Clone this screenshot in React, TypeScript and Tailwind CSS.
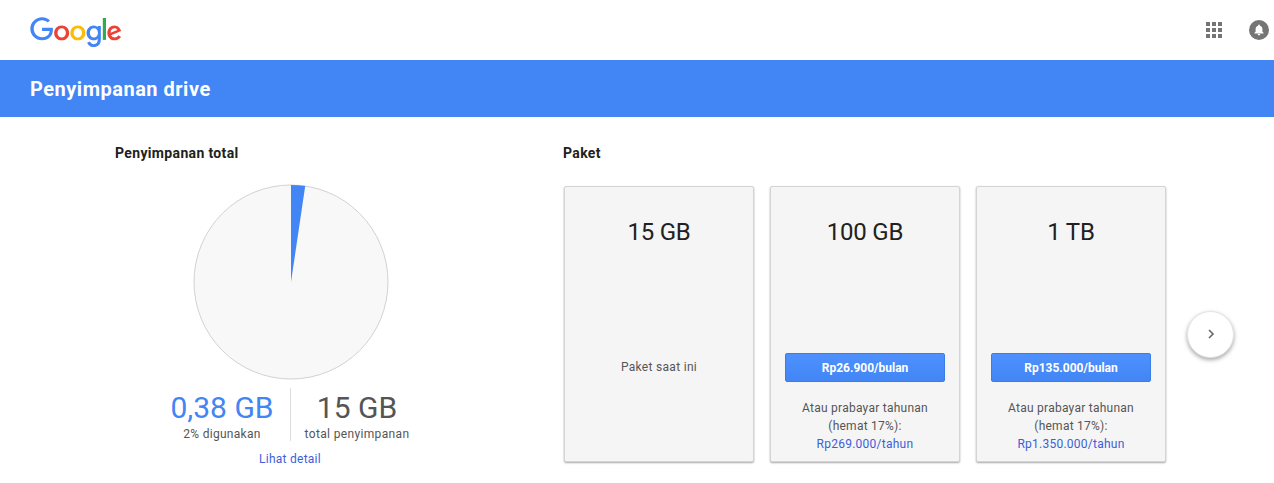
const font = { fontFamily: "Roboto, sans-serif" };

const plans = [
  { size: "15 GB", current: true },
  { size: "100 GB", price: "Rp26.900/bulan", year: "Rp269.000/tahun" },
  { size: "1 TB", price: "Rp135.000/bulan", year: "Rp1.350.000/tahun" },
];

function GoogleLogo() {
  return (
    <svg width="92" height="31" viewBox="0 0 272 92" aria-label="Google">
      <path fill="#EA4335" d="M115.75 47.18c0 12.77-9.99 22.18-22.25 22.18s-22.25-9.41-22.25-22.18C71.25 34.32 81.24 25 93.5 25s22.25 9.32 22.25 22.18zm-9.74 0c0-7.98-5.79-13.44-12.51-13.44S80.99 39.2 80.99 47.18c0 7.9 5.79 13.44 12.51 13.44s12.51-5.55 12.51-13.44z" />
      <path fill="#FBBC05" d="M163.75 47.18c0 12.77-9.99 22.18-22.25 22.18s-22.25-9.41-22.25-22.18c0-12.85 9.99-22.18 22.25-22.18s22.25 9.32 22.25 22.18zm-9.74 0c0-7.98-5.79-13.44-12.51-13.44s-12.51 5.46-12.51 13.44c0 7.9 5.79 13.44 12.51 13.44s12.51-5.55 12.51-13.44z" />
      <path fill="#4285F4" d="M209.75 26.34v39.82c0 16.38-9.66 23.07-21.08 23.07-10.75 0-17.22-7.19-19.66-13.07l8.48-3.53c1.51 3.61 5.21 7.87 11.17 7.87 7.31 0 11.84-4.51 11.84-13v-3.19h-.34c-2.18 2.69-6.38 5.04-11.68 5.04-11.09 0-21.25-9.66-21.25-22.09 0-12.52 10.16-22.26 21.25-22.26 5.29 0 9.49 2.35 11.68 4.96h.34v-3.61h9.25zm-8.56 20.92c0-7.81-5.21-13.52-11.84-13.52-6.72 0-12.35 5.71-12.35 13.52 0 7.73 5.63 13.36 12.35 13.36 6.63 0 11.84-5.63 11.84-13.36z" />
      <path fill="#34A853" d="M225 3v65h-9.5V3h9.5z" />
      <path fill="#EA4335" d="M262.02 54.48l7.56 5.04c-2.44 3.61-8.32 9.83-18.48 9.83-12.6 0-22.01-9.74-22.01-22.18 0-13.19 9.49-22.18 20.92-22.18 11.51 0 17.14 9.16 18.98 14.11l1.01 2.52-29.65 12.28c2.27 4.45 5.8 6.72 10.75 6.72 4.96 0 8.4-2.44 10.92-6.14zm-23.27-7.98l19.82-8.23c-1.09-2.77-4.37-4.7-8.23-4.7-4.95 0-11.84 4.37-11.59 12.93z" />
      <path fill="#4285F4" d="M35.29 41.41V32H67c.31 1.64.47 3.58.47 5.68 0 7.06-1.93 15.79-8.15 22.01-6.05 6.3-13.78 9.66-24.02 9.66C16.32 69.35.36 53.89.36 34.91.36 15.93 16.32.47 35.3.47c10.5 0 17.98 4.12 23.6 9.49l-6.64 6.64c-4.03-3.78-9.49-6.72-16.97-6.72-13.86 0-24.7 11.17-24.7 25.03 0 13.86 10.84 25.03 24.7 25.03 8.99 0 14.11-3.61 17.39-6.89 2.66-2.66 4.41-6.46 5.1-11.65l-22.49.01z" />
    </svg>
  );
}

function AppsIcon() {
  return (
    <svg width="16" height="16" viewBox="0 0 16 16" fill="#757575">
      {[0, 6, 12].map((y) =>
        [0, 6, 12].map((x) => <rect key={`${x}-${y}`} x={x} y={y} width="4" height="4" />)
      )}
    </svg>
  );
}

function BellIcon() {
  return (
    <svg width="20" height="20" viewBox="0 0 20 20">
      <circle cx="10" cy="10" r="10" fill="#757575" />
      <path
        fill="#fff"
        d="M10 4.6c-.5 0-.9.4-.9.9v.3C7.4 6.2 6.6 7.600 6.600 9.300v2.400l-1.100 1.100v.6h9v-.6l-1.100-1.100V9.300c0-1.700-.8-3.100-2.500-3.500v-.3c0-.5-.4-.9-.9-.9zM8.700 14c0 .7.6 1.300 1.300 1.300s1.300-.6 1.300-1.300z"
      />
    </svg>
  );
}

function Pie() {
  return (
    <svg width="196" height="196" viewBox="0 0 196 196" className="block">
      <circle cx="98" cy="98" r="97" fill="#f8f8f8" stroke="#d2d2d2" strokeWidth="1" />
      <path d="M98 98 L98 1 A97 97 0 0 1 112.200 2 Z" fill="#4285f4" />
    </svg>
  );
}

function PlanCard({ plan }: { plan: (typeof plans)[number] }) {
  return (
    <div className="flex h-[276px] w-[190px] flex-col items-center rounded-[2px] border border-[#d4d4d4] bg-[#f5f5f5] px-[14px] shadow-[0_1px_2px_rgba(0,0,0,0.35)]">
      <div className="mt-[30px] text-[24px] leading-[30px] tracking-[-0.2px] text-[#212121]">{plan.size}</div>
      {plan.current ? (
        <div className="mt-[109px] text-[12px] leading-[22px] tracking-[0.3px] text-[#555]">Paket saat ini</div>
      ) : (
        <>
          <button className="mt-[106px] h-[29px] w-[160px] shrink-0 rounded-[2px] border border-[#3a7de8] bg-gradient-to-b from-[#4d90fe] to-[#4285f4] text-[12px] font-bold text-white">
            {plan.price}
          </button>
          <div className="mt-[17px] text-center text-[12px] leading-[18px] tracking-[0.25px] text-[#555]">
            <div>Atau prabayar tahunan</div>
            <div>(hemat 17%):</div>
            <div className="text-[#3b5fd9]">{plan.year}</div>
          </div>
        </>
      )}
    </div>
  );
}

export default function App() {
  return (
    <div className="h-[483px] w-[1274px] overflow-hidden bg-white" style={font}>
      <header className="flex h-[60px] items-start justify-between pl-[30px] pr-[5px] pt-[17px]">
        <GoogleLogo />
        <div className="mt-[3px] flex items-center gap-[27px]">
          <AppsIcon />
          <BellIcon />
        </div>
      </header>

      <div className="flex h-[57px] items-center bg-[#4285f4] pl-[30px]">
        <h1 className="text-[20px] font-bold tracking-[0.5px] text-white">Penyimpanan drive</h1>
      </div>

      <main className="flex pl-[115px] pt-[26px]">
        <section className="w-[352px]">
          <h2 className="text-[14px] font-bold leading-[20px] tracking-[0.35px] text-[#212121]">Penyimpanan total</h2>
          <div className="mt-[21px] flex justify-center">
            <Pie />
          </div>
          <div className="ml-[39px] mt-[8px] flex">
            <div className="w-[136px] pt-[2px] text-center">
              <div className="text-[30px] leading-[36px] text-[#4285f4]">0,38 GB</div>
              <div className="text-[12px] leading-[16px] tracking-[0.3px] text-[#555]">2% digunakan</div>
            </div>
            <div className="h-[53px] w-px bg-[#dcdcdc]" />
            <div className="w-[132px] pt-[2px] text-center">
              <div className="text-[30px] leading-[36px] text-[#555]">15 GB</div>
              <div className="text-[12px] leading-[16px] tracking-[0.35px] text-[#555]">total penyimpanan</div>
            </div>
          </div>
          <div className="mt-[9px] pr-[2px] text-center text-[12px] leading-[16px] tracking-[0.25px] text-[#3b5fd9]">Lihat detail</div>
        </section>

        <section className="ml-[96px]">
          <h2 className="text-[14px] font-bold leading-[20px] tracking-[0.35px] text-[#212121]">Paket</h2>
          <div className="ml-px mt-[23px] flex items-center">
            <div className="flex gap-[16px]">
              {plans.map((p) => (
                <PlanCard key={p.size} plan={p} />
              ))}
            </div>
            <button className="ml-[21px] mt-[20px] flex h-[47px] w-[47px] items-center justify-center rounded-full border border-[#e4e4e4] bg-white shadow-[0_2px_4px_rgba(0,0,0,0.35)]">
              <svg width="10" height="10" viewBox="0 0 10 10" fill="none" stroke="#666" strokeWidth="1.600">
                <path d="M3 1 L7 5 L3 9" />
              </svg>
            </button>
          </div>
        </section>
      </main>
    </div>
  );
}
